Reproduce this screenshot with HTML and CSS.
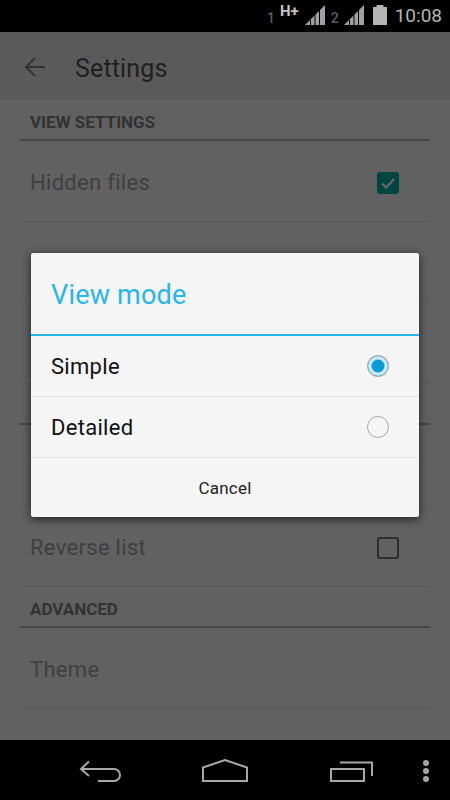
FILE: index.html
```html
<!DOCTYPE html>
<html lang="en">
<head>
    <meta charset="UTF-8">
    <meta name="viewport" content="width=device-width, initial-scale=1.0">
    <title>Settings</title>
    <link rel="stylesheet" href="styles.css">
</head>
<body>
    <div class="phone">
        <div class="status-bar">
            <span class="sim-num">1</span>
            <span class="net-type">H+</span>
            <svg class="signal" width="20" height="20" viewBox="0 0 20 20"><path d="M0 20 L20 0 V20 Z" fill="#a0a0a0"/><path d="M5.500 20v-5M10 20v-10M14.500 20v-15" stroke="#000" stroke-width="1"/></svg>
            <span class="sim-num">2</span>
            <svg class="signal" width="20" height="20" viewBox="0 0 20 20"><path d="M0 20 L20 0 V20 Z" fill="#a0a0a0"/><path d="M5.500 20v-5M10 20v-10M14.500 20v-15" stroke="#000" stroke-width="1"/></svg>
            <svg class="battery" width="14" height="20" viewBox="0 0 14 20"><path d="M3.500 0h7v2H14v18H0V2h3.500z" fill="#b4b4b4"/></svg>
            <span class="clock">10:08</span>
        </div>

        <div class="main">
            <header class="toolbar">
                <svg class="back" width="24" height="24" viewBox="0 0 24 24"><path d="M22 12H3M12 3l-9 9 9 9" fill="none" stroke="#808080" stroke-width="2"/></svg>
                <h1>Settings</h1>
            </header>

            <section class="settings">
                <h2>VIEW SETTINGS</h2>
                <div class="row"><span>Hidden files</span><span class="check on"><svg width="18" height="18" viewBox="0 0 18 18"><path d="M3 9.500l4.200 4L15 5" fill="none" stroke="#fff" stroke-width="2.400"/></svg></span></div>
                <div class="row"><span></span><span class="check off"></span></div>
                <div class="row"></div>
                <h2></h2>
                <div class="row"></div>
                <div class="row"><span>Reverse list</span><span class="check"></span></div>
                <h2>ADVANCED</h2>
                <div class="row"><span>Theme</span></div>
            </section>

            <div class="scrim">
                <div class="dialog">
                    <div class="dialog-title">View mode</div>
                    <div class="option"><span>Simple</span><span class="radio on"></span></div>
                    <div class="option"><span>Detailed</span><span class="radio"></span></div>
                    <div class="cancel">Cancel</div>
                </div>
            </div>
        </div>

        <nav class="nav-bar">
            <svg class="nav-back" width="44" height="24" viewBox="0 0 44 24"><path d="M10 1.500L2 9l8 7M2 9h33a6 6 0 0 1 0 12H19" fill="none" stroke="#a8a8a8" stroke-width="2"/></svg>
            <svg class="nav-home" width="46" height="26" viewBox="0 0 46 26"><path d="M1 22V8.500L23 1l22 7.500V22z" fill="none" stroke="#a8a8a8" stroke-width="2"/></svg>
            <svg class="nav-recent" width="43" height="24" viewBox="0 0 43 24"><path d="M1 9h33v12H1zM10 2.500h32V16" fill="none" stroke="#a8a8a8" stroke-width="2"/></svg>
            <span class="nav-menu"><i></i><i></i><i></i></span>
        </nav>
    </div>
</body>
</html>
```
FILE: styles.css
```css
body {
    margin: 0;
    font-family: Roboto, "Liberation Sans", sans-serif;
    background-color: #000;
}

.phone {
    width: 450px;
    height: 800px;
    display: flex;
    flex-direction: column;
    overflow: hidden;
}

.status-bar {
    height: 32px;
    flex: none;
    box-sizing: border-box;
    display: flex;
    align-items: center;
    justify-content: flex-end;
    padding: 0 8px 2px 0;
    background-color: #000;
    color: #b4b4b4;
}

.sim-num {
    font-size: 14px;
    font-weight: 500;
    color: #5c5c5c;
    margin-top: 6px;
    margin-right: 5px;
}

.net-type {
    font-size: 15px;
    font-weight: 700;
    color: #c4c4c4;
    margin-top: -9px;
    margin-right: 6px;
}

.signal {
    margin-right: 6px;
}

.signal + .battery {
    margin-left: 3px;
}

.battery {
    margin-right: 8px;
}

.clock {
    font-size: 19px;
}

.main {
    flex: 1;
    position: relative;
    background-color: #f2f2f2;
}

.toolbar {
    height: 68px;
    box-sizing: border-box;
    display: flex;
    align-items: center;
    padding: 2px 0 0 23px;
    background-color: #e2e2e2;
}

.toolbar h1 {
    margin: 2px 0 0 28px;
    font-size: 25px;
    font-weight: 400;
    letter-spacing: 0.15px;
    color: #505050;
}

.settings {
    padding: 0 20px;
}

.settings h2 {
    height: 41px;
    box-sizing: border-box;
    margin: 0;
    padding: 5px 0 0 10px;
    display: flex;
    align-items: center;
    border-bottom: 2px solid #b4b4b4;
    font-size: 17px;
    font-weight: 700;
    color: #808080;
}

.row {
    height: 81px;
    box-sizing: border-box;
    padding: 3px 31px 0 10px;
    display: flex;
    align-items: center;
    justify-content: space-between;
    border-bottom: 1px solid #dcdcdc;
    font-size: 22px;
    letter-spacing: 0.3px;
    color: #a0a0a0;
}

.check {
    width: 22px;
    height: 22px;
    box-sizing: border-box;
    border: 2px solid #707070;
    border-radius: 3px;
    display: flex;
    align-items: center;
    justify-content: center;
}

.check.on {
    background-color: #00b0a0;
    border-color: #00b0a0;
}

.check.off {
    border-color: #222;
    background-color: #222;
}

.scrim {
    position: absolute;
    top: 0;
    left: 0;
    right: 0;
    bottom: 0;
    padding-bottom: 2px;
    display: flex;
    align-items: center;
    justify-content: center;
    background-color: rgba(0, 0, 0, 0.6);
}

.dialog {
    width: 388px;
    background-color: #f5f5f5;
    border-radius: 2px;
    box-shadow: 0 2px 8px rgba(0, 0, 0, 0.7);
}

.dialog-title {
    height: 83px;
    box-sizing: border-box;
    padding: 2px 0 0 20px;
    display: flex;
    align-items: center;
    border-bottom: 2px solid #29b6e8;
    font-size: 27px;
    letter-spacing: 0.2px;
    color: #29b6e8;
}

.option {
    height: 61px;
    box-sizing: border-box;
    padding: 0 30px 0 20px;
    display: flex;
    align-items: center;
    justify-content: space-between;
    border-bottom: 1px solid #e2e2e2;
    font-size: 22px;
    letter-spacing: 0.3px;
    color: #111;
}

.radio {
    width: 22px;
    height: 22px;
    box-sizing: border-box;
    border: 1.500px solid #a8a8a8;
    border-radius: 50%;
    background-color: #f5f5f5;
}

.radio.on {
    background-color: #0b9bd3;
    box-shadow: inset 0 0 0 3.500px #c8e8f4;
}

.cancel {
    height: 59px;
    display: flex;
    align-items: center;
    justify-content: center;
    font-size: 17px;
    letter-spacing: 0.2px;
    color: #222;
}

.nav-bar {
    height: 60px;
    flex: none;
    display: flex;
    align-items: center;
    padding: 4px 0 0 79px;
    box-sizing: border-box;
    background-color: #000;
}

.nav-home {
    margin-left: 79px;
}

.nav-recent {
    margin-left: 82px;
}

.nav-menu {
    margin-left: 50px;
    margin-top: -2px;
    display: flex;
    flex-direction: column;
    gap: 2px;
}

.nav-menu i {
    width: 6px;
    height: 6px;
    border-radius: 50%;
    background-color: #a8a8a8;
}
```
